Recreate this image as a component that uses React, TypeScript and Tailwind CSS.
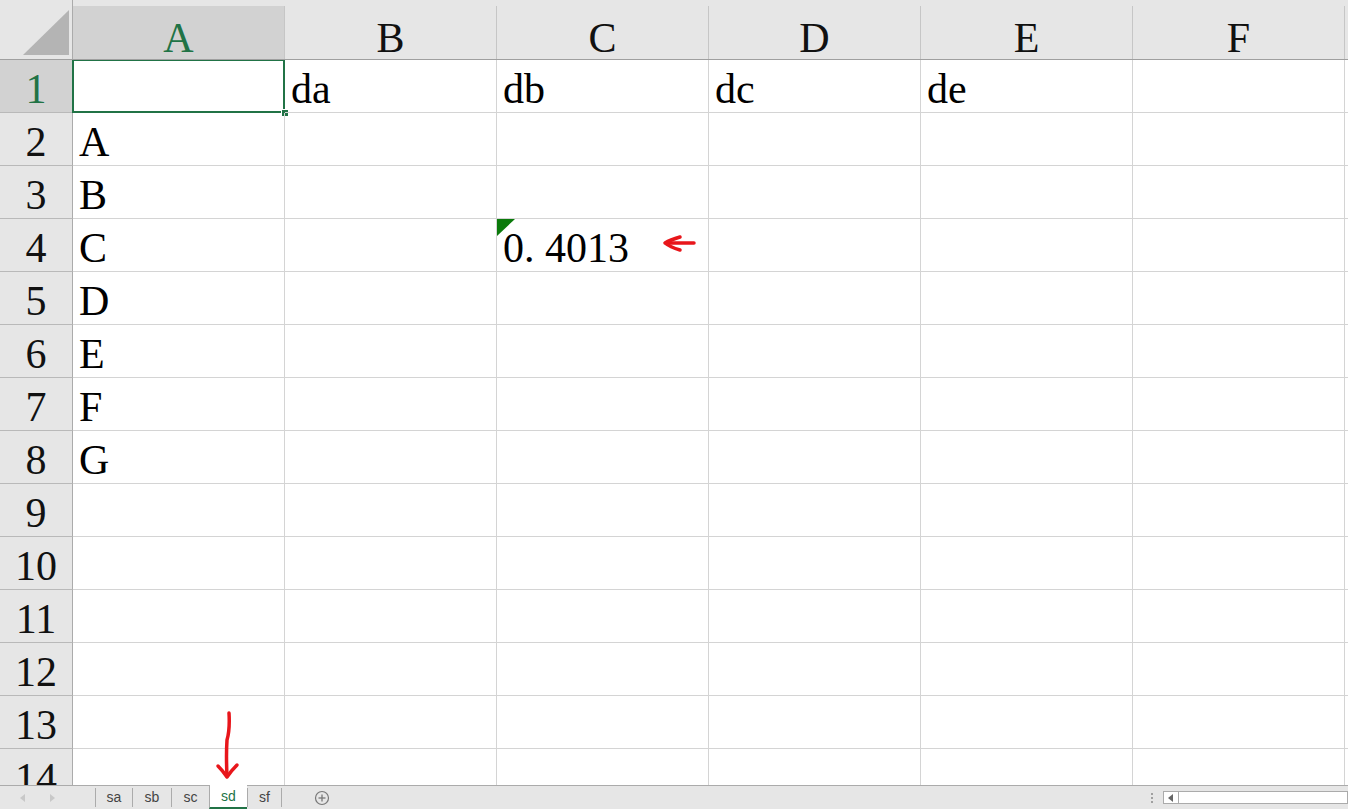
import React from "react";

const cols = ["A", "B", "C", "D", "E", "F"];
const rows = Array.from({ length: 14 }, (_, i) => i + 1);

const data: Record<string, string> = {
  "1B": "da",
  "1C": "db",
  "1D": "dc",
  "1E": "de",
  "2A": "A",
  "3A": "B",
  "4A": "C",
  "5A": "D",
  "6A": "E",
  "7A": "F",
  "8A": "G",
  "4C": "0. 4013",
};

const tabs = ["sa", "sb", "sc", "sd", "sf"];

export default function App() {
  return (
    <div
      className="relative w-[1348px] h-[809px] overflow-hidden bg-white flex flex-col"
      style={{ fontFamily: '"Liberation Serif", "Times New Roman", serif' }}
    >
      {/* Column header */}
      <div className="flex h-[60px] shrink-0 bg-[#e6e6e6] border-b border-[#9f9f9f]">
        <div className="relative w-[73px] shrink-0 border-r border-[#ababab]">
          <svg className="absolute left-0 top-0" width="72" height="59">
            <polygon points="69,10 69,55 23,55" fill="#b4b4b4" />
          </svg>
        </div>
        {cols.map((c) => (
          <div
            key={c}
            className={`mt-[6px] w-[212px] shrink-0 border-r border-[#c6c6c6] flex items-end justify-center text-[42px] leading-none ${
              c === "A" ? "bg-[#d2d2d2] text-[#217346]" : "text-[#111]"
            }`}
          >
            {c}
          </div>
        ))}
        <div className="flex-1 mt-[6px]" />
      </div>

      {/* Body */}
      <div className="flex-1 overflow-hidden">
        {rows.map((r) => (
          <div key={r} className="flex h-[53px]">
            <div
              className={`w-[73px] shrink-0 border-r border-b border-r-[#ababab] border-b-[#b9b9b9] flex items-end justify-center pb-[2px] text-[42px] leading-none ${
                r === 1 ? "bg-[#d2d2d2] text-[#217346]" : "bg-[#e6e6e6] text-[#111]"
              }`}
            >
              {r}
            </div>
            {cols.map((c) => {
              const key = `${r}${c}`;
              const v = data[key];
              return (
                <div
                  key={c}
                  className="relative w-[212px] shrink-0 border-r border-b border-[#d4d4d4] flex items-end pl-[6px] pb-[2px] text-[42px] leading-none text-black whitespace-pre"
                >
                  {key === "4C" && (
                    <svg className="absolute left-0 top-0" width="19" height="18">
                      <polygon points="0,0 18,0 0,17" fill="#0b7a0b" />
                    </svg>
                  )}
                  {key === "1A" && (
                    <>
                      <div className="absolute left-[-1px] top-[-1px] w-[213px] h-[54px] border-2 border-[#217346]" />
                      <div className="absolute right-[-5px] bottom-[-5px] w-[8px] h-[8px] bg-[#217346] border border-white" />
                    </>
                  )}
                  {v}
                </div>
              );
            })}
            <div className="flex-1 border-b border-[#d4d4d4]" />
          </div>
        ))}
      </div>

      {/* Sheet tab bar */}
      <div
        className="h-[24px] shrink-0 flex items-stretch bg-[#e6e6e6] border-t border-[#ababab] text-[14px] text-[#444]"
        style={{ fontFamily: '"Liberation Sans", Arial, sans-serif' }}
      >
        <div className="w-[95px] shrink-0 relative">
          <svg className="absolute left-[19px] top-[7px]" width="8" height="10">
            <polygon points="6,1 6,9 1,5" fill="#c8c8c8" />
          </svg>
          <svg className="absolute left-[48px] top-[7px]" width="8" height="10">
            <polygon points="2,1 2,9 7,5" fill="#c8c8c8" />
          </svg>
        </div>
        {tabs.map((t, i) => (
          <div
            key={t}
            className={`flex items-center justify-center border-l border-[#ababab] ${
              i === tabs.length - 1 ? "border-r" : ""
            } ${
              t === "sd"
                ? "bg-white text-[#217346] border-b-2 border-b-[#217346] mt-[-1px]"
                : "mt-[2px] mb-[2px]"
            } ${["w-[37px]", "w-[39px]", "w-[38px]", "w-[38px]", "w-[35px]"][i]}`}
          >
            {t}
          </div>
        ))}
        <div className="w-[80px] shrink-0 relative">
          <svg className="absolute left-[32px] top-[4px]" width="16" height="16" viewBox="0 0 16 16">
            <circle cx="8" cy="8" r="6.5" fill="none" stroke="#777" strokeWidth="1.2" />
            <line x1="8" y1="4.5" x2="8" y2="11.5" stroke="#777" strokeWidth="1.3" />
            <line x1="4.5" y1="8" x2="11.5" y2="8" stroke="#777" strokeWidth="1.3" />
          </svg>
        </div>
        <div className="flex-1" />
        <div className="w-[18px] shrink-0 flex flex-col items-center justify-center gap-[2px] mr-[2px]">
          <div className="w-[2px] h-[2px] bg-[#a0a0a0]" />
          <div className="w-[2px] h-[2px] bg-[#a0a0a0]" />
          <div className="w-[2px] h-[2px] bg-[#a0a0a0]" />
        </div>
        <div className="w-[185px] shrink-0 my-[5px] border border-[#ababab] bg-white flex">
          <div className="w-[15px] border-r border-[#ababab] flex items-center justify-center">
            <svg width="6" height="8">
              <polygon points="5,0 5,8 0,4" fill="#666" />
            </svg>
          </div>
        </div>
      </div>

      {/* Red annotation arrows */}
      <svg className="absolute inset-0 pointer-events-none" width="1348" height="809">
        <g stroke="#e8161b" strokeWidth="3.5" fill="none" strokeLinecap="round" strokeLinejoin="round">
          <path d="M694 243 L666 243" />
          <path d="M680 237 Q670 240 665 243 Q670 247 680 250" />
          <path d="M229 713 Q230 730 227 740 Q226 755 227 776" />
          <path d="M218 766 Q223 771 227 777 Q231 771 237 765" />
        </g>
      </svg>
    </div>
  );
}
